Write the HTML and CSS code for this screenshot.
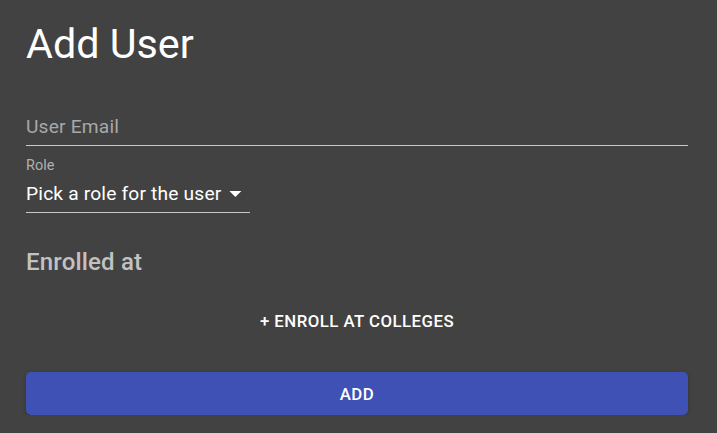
FILE: index.html
```html
<!DOCTYPE html>
<html lang="en">
<head>
<meta charset="utf-8">
<title>Add User</title>
<link rel="stylesheet" href="styles.css">
</head>
<body>
<div class="dialog">
  <h1 class="title">Add User</h1>
  <div class="field field-email">
    <span class="placeholder">User Email</span>
  </div>
  <div class="role">
    <div class="label">Role</div>
    <div class="select">
      <span class="select-text">Pick a role for the user</span>
      <svg class="select-icon" viewBox="0 0 24 24" aria-hidden="true"><path d="M7 10l5 5 5-5z" fill="#ffffff"/></svg>
    </div>
  </div>
  <h2 class="section">Enrolled at</h2>
  <div class="enroll-row">
    <button class="text-btn">+ Enroll at colleges</button>
  </div>
  <button class="primary-btn">Add</button>
</div>
</body>
</html>
```

FILE: styles.css
```css
html, body {
  margin: 0;
  padding: 0;
  background: #424242;
}

body {
  font-family: Roboto, "Noto Sans", "Liberation Sans", sans-serif;
  color: #ffffff;
}

.dialog {
  padding: 19px 29px 0 26px;
  display: flex;
  flex-direction: column;
}

.title {
  margin: 0;
  font-size: 41.3px;
  font-weight: 400;
  line-height: 50.4px;
  color: #ffffff;
}

.field {
  margin-top: 38.6px;
  padding: 7px 0;
  border-bottom: 1px solid #c9c9c9;
  font-size: 19.2px;
  line-height: 23px;
}

.placeholder {
  color: #a8a8a8;
  letter-spacing: 0.18px;
}

.role {
  margin-top: 10.6px;
  display: flex;
  flex-direction: column;
  align-items: flex-start;
}

.label {
  font-size: 14.4px;
  line-height: 17px;
  color: #b0b0b0;
  letter-spacing: 0.1px;
}

.select {
  margin-top: 8.4px;
  display: flex;
  align-items: center;
  padding-bottom: 7px;
  border-bottom: 1px solid #c9c9c9;
  font-size: 19.2px;
  line-height: 23px;
  color: #ffffff;
}

.select-text {
  letter-spacing: 0.18px;
}

.select-icon {
  width: 28.8px;
  height: 28.8px;
  margin: -3px 0;
  flex: none;
}

.section {
  margin: 30.4px 0 0;
  font-size: 24px;
  font-weight: 500;
  line-height: 38.4px;
  color: #c2c2c2;
  letter-spacing: 0.18px;
}

.enroll-row {
  margin-top: 24.8px;
  display: flex;
  justify-content: center;
}

.text-btn {
  background: none;
  border: none;
  padding: 0 9.6px;
  margin: 0;
  font-family: inherit;
  font-size: 16.8px;
  font-weight: 500;
  line-height: 29.4px;
  letter-spacing: 0.48px;
  text-transform: uppercase;
  color: #ffffff;
}

.primary-btn {
  margin-top: 36px;
  height: 43px;
  border: none;
  border-radius: 4.8px;
  background: #3f51b5;
  box-shadow: 0 3px 1px -2px rgba(0,0,0,0.2), 0 2px 2px 0 rgba(0,0,0,0.14), 0 1px 5px 0 rgba(0,0,0,0.12);
  font-family: inherit;
  font-size: 16.8px;
  font-weight: 500;
  letter-spacing: 0.48px;
  text-transform: uppercase;
  color: #ffffff;
  display: flex;
  align-items: center;
  justify-content: center;
  padding: 2px 0 0;
}
```
